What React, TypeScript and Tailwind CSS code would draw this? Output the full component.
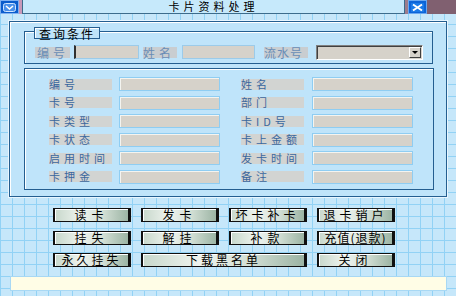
import React from "react";

const F = { fontFamily: '"Noto Sans CJK SC", "Noto Sans", sans-serif' };

function DLabel({ children }: { children: React.ReactNode }) {
  return (
    <div className="h-[11px] w-[63px] bg-[#d2d4d2] text-[#3a679e] text-[11px] leading-[11px] tracking-[4px] whitespace-nowrap">
      {children}
    </div>
  );
}

function DInput() {
  return (
    <div className="h-[14px] w-[101px] bg-[#d6d2ca] border border-[#8fcdf2] shadow-[inset_1px_1px_0_#f4f4f0]" />
  );
}

function Btn({ children, className = "" }: { children: React.ReactNode; className?: string }) {
  return (
    <div
      className={
        "h-[14px] border border-[#101010] border-r-[3px] border-l-[2px] bg-[linear-gradient(to_right,#c8d8cc,#eef3ee_35%,#d4e0d6_65%,#9cb4a4)] shadow-[inset_1px_1px_0_#ffffff] flex items-center justify-center text-[12px] leading-none text-black whitespace-nowrap " +
        className
      }
    >
      {children}
    </div>
  );
}

export default function App() {
  const left = ["编号", "卡号", "卡类型", "卡状态", "启用时间", "卡押金"];
  const right = ["姓名", "部门", "卡ID号", "卡上金额", "发卡时间", "备注"];
  return (
    <div
      style={F}
      className="w-[456px] h-[296px] overflow-hidden flex flex-col bg-[#c6e7fa] bg-[linear-gradient(to_right,#92d2f5_1px,transparent_1px),linear-gradient(to_bottom,#92d2f5_1px,transparent_1px)] bg-[length:12px_12px]"
    >
      {/* title bar */}
      <div className="flex h-[14px] shrink-0">
        <div className="w-[19px] h-[14px] shrink-0 bg-[#0a5ccc] border border-[#7fb0f0] flex items-center justify-center">
          <svg width="13" height="9" viewBox="0 0 13 9">
            <rect x="0.5" y="0.5" width="12" height="8" rx="2" fill="#4a90ea" stroke="#cfe4ff" />
            <path d="M3 3 L6.5 6 L10 3" stroke="#ffffff" strokeWidth="1.6" fill="none" />
          </svg>
        </div>
        <div className="w-[3px] shrink-0 bg-[#c898b8]" />
        <div className="w-[383px] h-[14px] shrink-0 bg-[#c6e9fb] border-b border-x border-[#3c6c8c] flex items-center justify-center">
          <span className="text-[11px] leading-[11px] text-black tracking-[4px]">卡片资料处理</span>
        </div>
        <div className="w-[3px] shrink-0 bg-[#9c7c8c]" />
        <div className="w-[19px] h-[14px] shrink-0 bg-[#0c64d8] border border-[#6aa8f0] flex items-center justify-center">
          <svg width="13" height="9" viewBox="0 0 13 9">
            <rect x="0" y="0" width="13" height="9" fill="#1a7ae8" />
            <path d="M2 1.5 L11 7.5 M11 1.5 L2 7.5" stroke="#ffffff" strokeWidth="2" />
          </svg>
        </div>
        <div className="flex-1 bg-[#806070]" />
      </div>

      {/* outer panel */}
      <div className="ml-[9px] mt-[7px] w-[438px] h-[176px] shrink-0 bg-[#bfe4fa] border border-[#245e90] shadow-[inset_1px_1px_0_#ffffff,0_0_0_1px_#e8f6ff] pl-[14px] pt-[9px] flex flex-col">
        {/* query group */}
        <div className="relative w-[409px] h-[33px] border border-[#245e90] shadow-[inset_1px_1px_0_#ffffff] flex items-center pl-[10px] pt-[9px]">
          <div className="absolute left-[9px] top-[-5px] h-[12px] px-[4px] bg-[#bfe4fa] border border-[#245e90] shadow-[inset_1px_1px_0_#ffffff] text-[12px] leading-[11px] text-black tracking-[2px]">
            查询条件
          </div>
          <div className="h-[11px] w-[35px] bg-[#c9cdd0] text-[#6a8db6] text-[12px] leading-[11px] tracking-[4px] pl-[2px] whitespace-nowrap">编号</div>
          <div className="ml-[4px] h-[14px] w-[65px] bg-[#d6d2ca] border border-[#9ccbe9] border-l-[#303030] border-l-[2px]" />
          <div className="ml-[4px] h-[11px] w-[34px] bg-[#c9cdd0] text-[#6a8db6] text-[12px] leading-[11px] tracking-[4px] whitespace-nowrap">姓名</div>
          <div className="ml-[5px] h-[14px] w-[73px] bg-[#d6d2ca] border border-[#9ccbe9]" />
          <div className="ml-[9px] h-[11px] w-[44px] bg-[#c9cdd0] text-[#6a8db6] text-[12px] leading-[11px] tracking-[1px] whitespace-nowrap">流水号</div>
          <div className="ml-[8px] h-[15px] w-[107px] bg-[#d6d2ca] border border-[#808080] border-b-[#ffffff] border-r-[#ffffff] shadow-[inset_1px_1px_0_#404040] flex justify-end p-[1px]">
            <div className="w-[12px] h-full bg-[#d6d2ca] border border-[#ffffff] border-r-[#404040] border-b-[#404040] flex items-center justify-center">
              <svg width="6" height="3" viewBox="0 0 6 3">
                <path d="M0 0 L6 0 L3 3 Z" fill="#000" />
              </svg>
            </div>
          </div>
        </div>

        {/* details group */}
        <div className="mt-[4px] w-[410px] h-[122px] border border-[#245e90] shadow-[inset_1px_1px_0_#ffffff] pt-[8px] pl-[24px] flex flex-col gap-[4.6px]">
          {left.map((l, i) => (
            <div key={l} className="flex items-center h-[14px]">
              <DLabel>{l}</DLabel>
              <div className="ml-[7px]">
                <DInput />
              </div>
              <div className="ml-[21px]">
                <DLabel>{right[i]}</DLabel>
              </div>
              <div className="ml-[8px]">
                <DInput />
              </div>
            </div>
          ))}
        </div>
      </div>

      {/* buttons */}
      <div className="ml-[53px] mt-[11px] grid grid-cols-[78px_78px_78px_78px] gap-x-[10px] gap-y-[8.5px]">
        <Btn className="tracking-[5px]">读卡</Btn>
        <Btn className="tracking-[5px]">发卡</Btn>
        <Btn className="tracking-[4px]">坏卡补卡</Btn>
        <Btn className="tracking-[4px]">退卡销户</Btn>
        <Btn className="tracking-[5px]">挂失</Btn>
        <Btn className="tracking-[5px]">解挂</Btn>
        <Btn className="tracking-[5px]">补款</Btn>
        <Btn className="tracking-[1px]">充值(退款)</Btn>
        <Btn className="tracking-[3px]">永久挂失</Btn>
        <Btn className="col-span-2 tracking-[3px]">下载黑名单</Btn>
        <Btn className="tracking-[5px]">关闭</Btn>
      </div>

      {/* status bar */}
      <div className="ml-[10px] mt-[9px] w-[437px] h-[15px] bg-[#fffde6] border border-[#a8d8f4]" />
    </div>
  );
}
